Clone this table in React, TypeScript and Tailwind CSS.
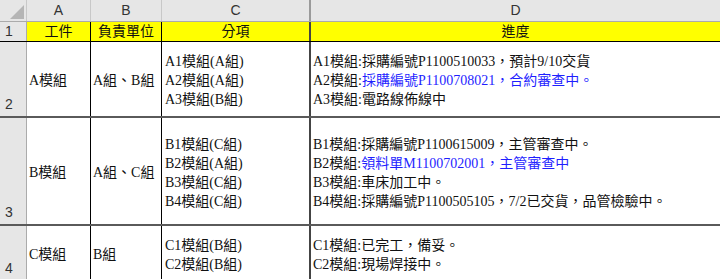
const cellFont = { fontFamily: '"Liberation Serif", "Noto Sans CJK TC", serif' };

type Line = { label: string; text: string; blue?: boolean };

const rows = [
  {
    n: "2",
    h: "h-[76px]",
    a: "A模組",
    b: "A組、B組",
    c: ["A1模組(A組)", "A2模組(A組)", "A3模組(B組)"],
    d: [
      { label: "A1模組:", text: "採購編號P1100510033，預計9/10交貨" },
      { label: "A2模組:", text: "採購編號P1100708021，合約審查中。", blue: true },
      { label: "A3模組:", text: "電路線佈線中" },
    ] as Line[],
  },
  {
    n: "3",
    h: "h-[108px]",
    a: "B模組",
    b: "A組、C組",
    c: ["B1模組(C組)", "B2模組(A組)", "B3模組(C組)", "B4模組(C組)"],
    d: [
      { label: "B1模組:", text: "採購編號P1100615009，主管審查中。" },
      { label: "B2模組:", text: "領料單M1100702001，主管審查中", blue: true },
      { label: "B3模組:", text: "車床加工中。" },
      { label: "B4模組:", text: "採購編號P1100505105，7/2已交貨，品管檢驗中。" },
    ] as Line[],
  },
  {
    n: "4",
    h: "h-[56px]",
    a: "C模組",
    b: "B組",
    c: ["C1模組(B組)", "C2模組(B組)"],
    d: [
      { label: "C1模組:", text: "已完工，備妥。" },
      { label: "C2模組:", text: "現場焊接中。" },
    ] as Line[],
  },
];

function App() {
  return (
    <div className="w-[720px] h-[279px] overflow-hidden bg-white text-[14px] text-[#111]" style={cellFont}>
      {/* column letters */}
      <div className="flex h-[22px] bg-[#e6e6e6] border-b border-[#ababab] text-[#333]" style={{ fontFamily: '"Liberation Sans", sans-serif' }}>
        <div className="w-[27px] shrink-0 border-r border-[#c8c8c8] flex items-end justify-end p-[2px]">
          <svg width="14" height="14" viewBox="0 0 14 14"><path d="M14 0 L14 14 L0 14 Z" fill="#b5b5b5" /></svg>
        </div>
        <div className="w-[64px] shrink-0 border-r border-[#c8c8c8] flex items-center justify-center">A</div>
        <div className="w-[71px] shrink-0 border-r border-[#c8c8c8] flex items-center justify-center">B</div>
        <div className="w-[149px] shrink-0 border-r-2 border-[#9a9a9a] flex items-center justify-center">C</div>
        <div className="flex-1 flex items-center justify-center">D</div>
      </div>

      {/* header row */}
      <div className="flex h-[20px] border-b border-black">
        <div className="w-[27px] shrink-0 bg-[#e6e6e6] border-r border-[#ababab] flex items-center pl-[5px] text-[#333]" style={{ fontFamily: '"Liberation Sans", sans-serif' }}>1</div>
        <div className="flex flex-1 bg-[#ffff00]">
          <div className="w-[64px] shrink-0 border-r border-black flex items-center justify-center">工件</div>
          <div className="w-[71px] shrink-0 border-r border-black flex items-center justify-center">負責單位</div>
          <div className="w-[149px] shrink-0 border-r-2 border-[#444] flex items-center justify-center">分項</div>
          <div className="flex-1 flex items-center justify-center">進度</div>
        </div>
      </div>

      {rows.map((r) => (
        <div key={r.n} className={`flex ${r.h} border-b-2 border-[#5a5a5a]`}>
          <div className="w-[27px] shrink-0 bg-[#e6e6e6] border-r border-[#ababab] flex items-end pl-[5px] pb-[1px] text-[#333]" style={{ fontFamily: '"Liberation Sans", sans-serif' }}>{r.n}</div>
          <div className="w-[64px] shrink-0 border-r border-black flex items-center pl-[2px] pt-[3px]">{r.a}</div>
          <div className="w-[71px] shrink-0 border-r border-black flex items-center pl-[2px] pt-[3px]">{r.b}</div>
          <div className="w-[149px] shrink-0 border-r-2 border-[#444] flex flex-col justify-center pl-[3px] pt-[3px] leading-[19px]">
            {r.c.map((t) => (
              <div key={t}>{t}</div>
            ))}
          </div>
          <div className="flex-1 flex flex-col justify-center pl-[2px] pt-[3px] leading-[19px] whitespace-nowrap">
            {r.d.map((l) => (
              <div key={l.label}>
                {l.label}
                <span className={l.blue ? "text-[#1f1fff]" : ""}>{l.text}</span>
              </div>
            ))}
          </div>
        </div>
      ))}
    </div>
  );
}

export default App;
